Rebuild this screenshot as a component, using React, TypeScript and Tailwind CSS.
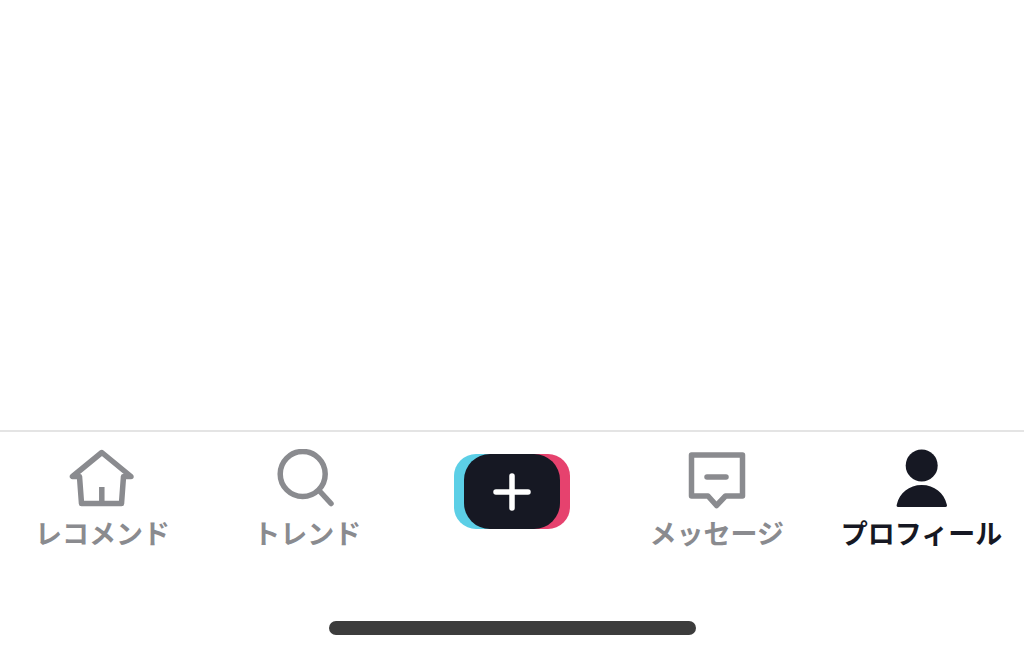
import React from "react";

const font = { fontFamily: '"Noto Sans CJK JP", "Noto Sans", sans-serif' };

function Label({ children, active }: { children: string; active?: boolean }) {
  return (
    <span
      className={`mt-[6px] h-[36px] leading-[36px] text-[27px] font-semibold whitespace-nowrap ${
        active ? "text-[#161823]" : "text-[#8a8b8f]"
      }`}
      style={font}
    >
      {children}
    </span>
  );
}

export default function App() {
  return (
    <div className="flex h-[657px] w-[1024px] flex-col overflow-hidden bg-white">
      <div className="h-[430px] shrink-0 bg-white" />
      <div className="h-[2px] shrink-0 bg-[#e4e4e4]" />
      <nav className="grid h-[135px] shrink-0 grid-cols-5 bg-white pt-[17px]">
        <div className="flex flex-col items-center">
          <svg width="66" height="60" viewBox="0 0 66 60" fill="none" stroke="#8a8b8f" strokeWidth="5.5" strokeLinecap="round" strokeLinejoin="round">
            <path d="M3.5 27.5H10.5L12.5 54.5H52.5L54.5 27.5H62L32.8 3.5Z" />
            <path d="M32.8 38V54" strokeLinecap="butt" />
          </svg>
          <Label>レコメンド</Label>
        </div>
        <div className="flex flex-col items-center">
          <svg width="60" height="60" viewBox="0 0 60 60" fill="none" stroke="#8a8b8f" strokeWidth="5.5" strokeLinecap="round">
            <circle cx="25.7" cy="25" r="22.5" />
            <path d="M43 42.5L54 54.5" />
          </svg>
          <Label>トレンド</Label>
        </div>
        <div className="flex flex-col items-center pt-[5px]">
          <div className="relative flex h-[75px] w-[96px] items-center justify-center">
            <div className="absolute left-[-10px] top-0 h-[75px] w-[60px] rounded-[22px] bg-[#5ccfe6]" />
            <div className="absolute right-[-10px] top-0 h-[75px] w-[60px] rounded-[22px] bg-[#e6426e]" />
            <div className="absolute inset-0 rounded-[26px] bg-[#161823]" />
            <svg className="relative" width="38" height="38" viewBox="0 0 38 38" fill="none" stroke="#ffffff" strokeWidth="5.5" strokeLinecap="round">
              <path d="M3 19H35M19 3V35" />
            </svg>
          </div>
        </div>
        <div className="flex flex-col items-center">
          <svg width="60" height="60" viewBox="0 0 60 60" fill="none" stroke="#8a8b8f" strokeWidth="5.5" strokeLinecap="round" strokeLinejoin="round">
            <path d="M4.5 6H55.5V47H38.5L29.5 56.5L21 47H4.5Z" />
            <path d="M20 28H39" />
          </svg>
          <Label>メッセージ</Label>
        </div>
        <div className="flex flex-col items-center">
          <svg width="60" height="60" viewBox="0 0 60 60" fill="#161823">
            <circle cx="29.7" cy="16.5" r="16" />
            <path d="M6 58C4.8 58 4.3 57 4.8 55.5C7.5 44 17 36 29.7 36C42.5 36 52 44 54.8 55.5C55.3 57 54.8 58 53.5 58Z" />
          </svg>
          <Label active>プロフィール</Label>
        </div>
      </nav>
      <div className="flex flex-1 justify-center bg-white pt-[54px]">
        <div className="h-[14px] w-[367px] rounded-full bg-[#3c3c3c]" />
      </div>
    </div>
  );
}
